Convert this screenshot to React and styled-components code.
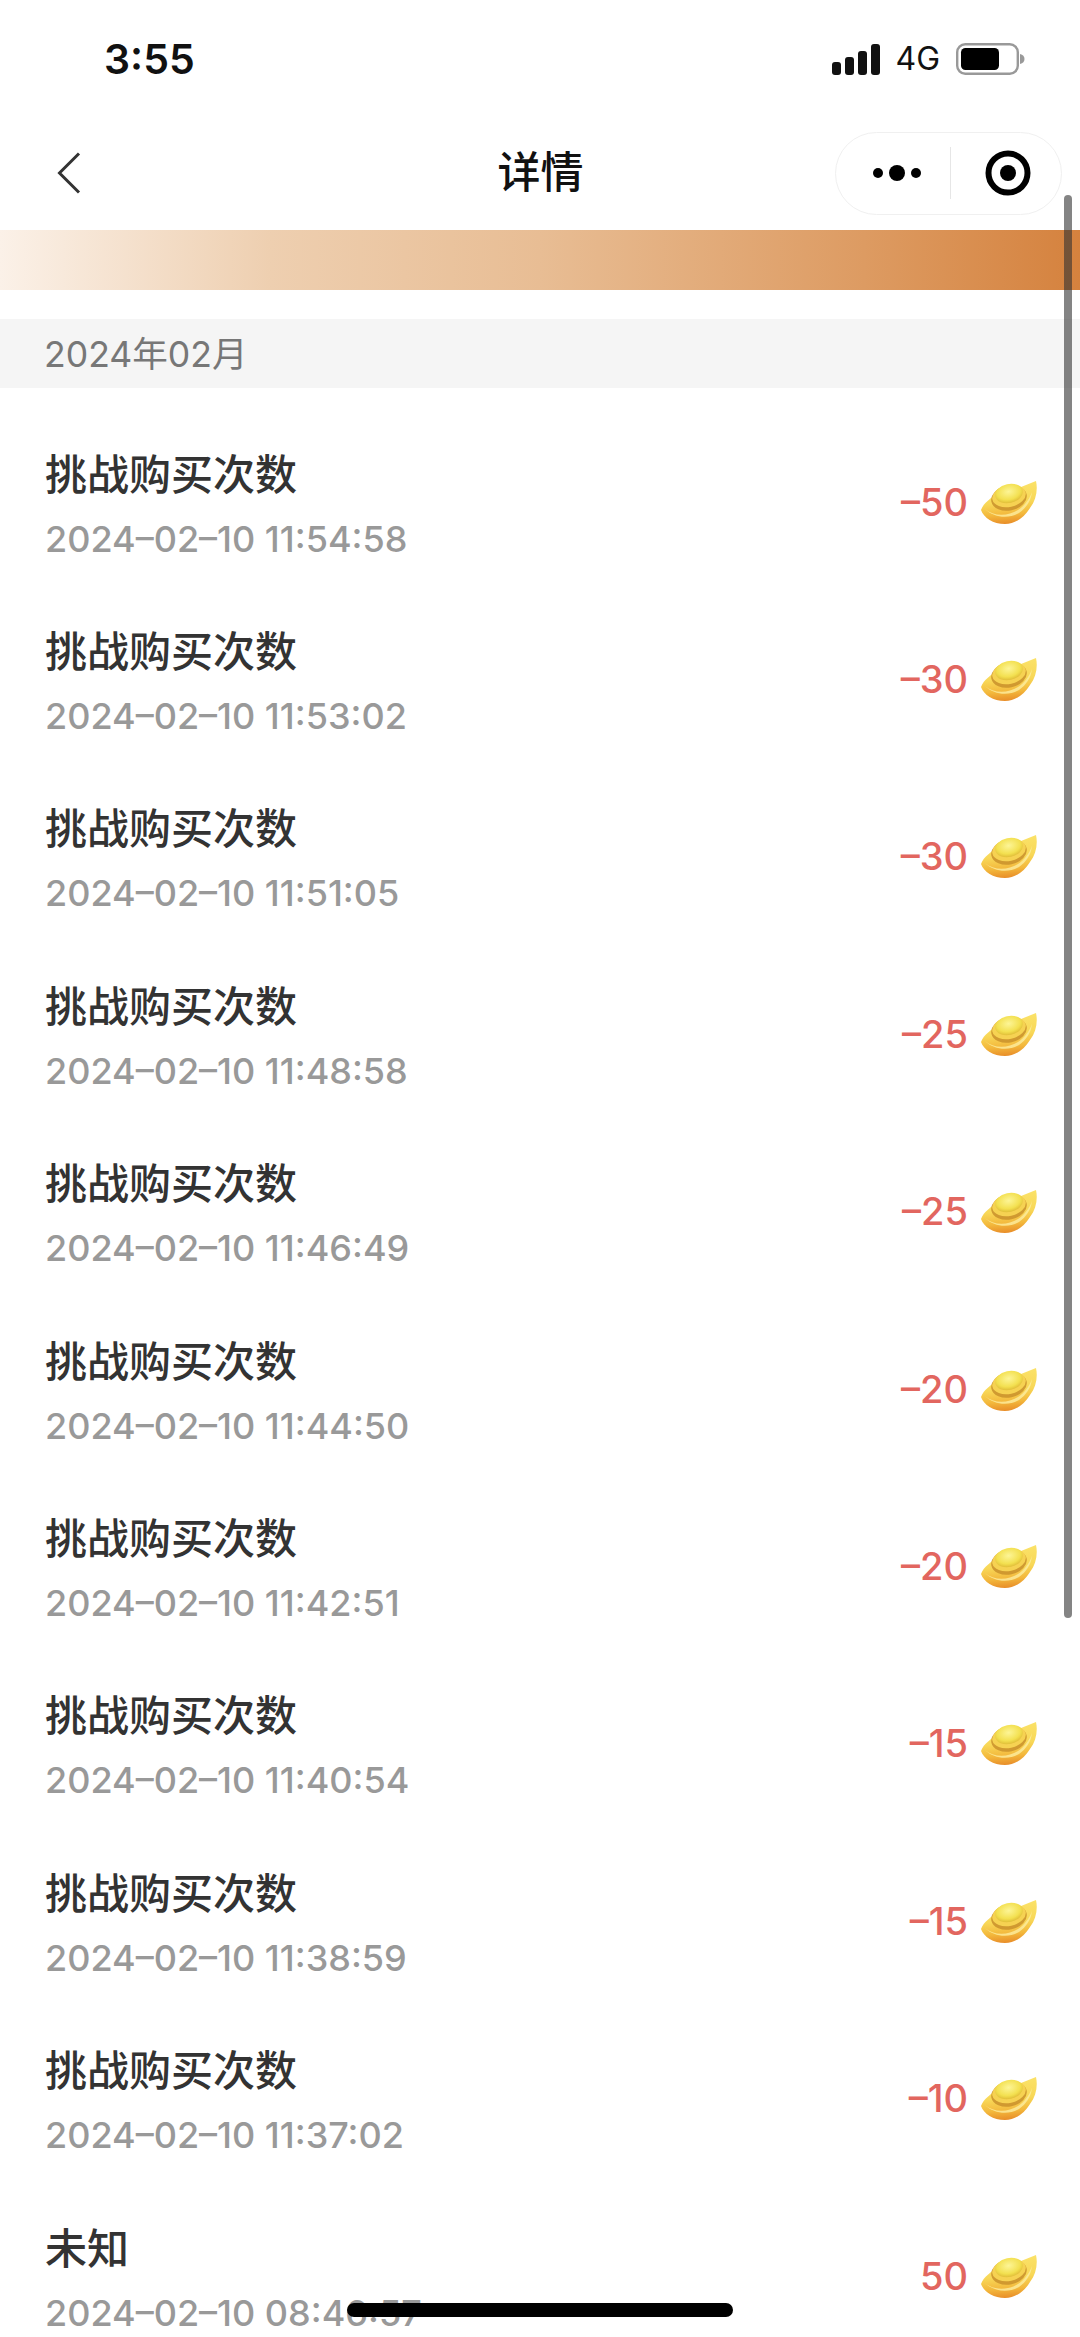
import React from "react";
import styled, { createGlobalStyle } from "styled-components";

const Global = createGlobalStyle`
  html, body { margin: 0; padding: 0; background: #fff; }
  * { box-sizing: border-box; }
`;
const LATIN = `Inter, "Liberation Sans", "Noto Sans CJK SC", sans-serif`;
const CJK = `"Noto Sans CJK SC", "Liberation Sans", sans-serif`;

const Page = styled.div`
  position: relative; width: 1080px; height: 2337px; overflow: hidden; background: #fff; font-family: ${LATIN};
`;
const StatusBar = styled.div`
  height: 116px; display: flex; align-items: center; justify-content: space-between; padding: 0 55px 0 104px;
`;
const Clock = styled.div`
  font-size: 41px; font-weight: 600; color: #111; line-height: 1; margin-top: 2px;
`;
const StatusIcons = styled.div`display: flex; align-items: center; margin-top: 2px;`;
const Network = styled.span`
  font-size: 32px; color: #111; line-height: 1; margin: 0 16px 0 15px;
`;
const Nav = styled.div`
  height: 114px; display: grid; grid-template-columns: 1fr auto 1fr; align-items: center; padding: 0 18px 0 19px;
`;
const Back = styled.div`display: flex; align-items: center; padding-left: 38px;`;
const NavTitle = styled.div`
  font-family: ${CJK}; font-size: 43px; font-weight: 500; color: #111; line-height: 1; margin-top: -8px;
`;
const Capsule = styled.div`
  justify-self: end; width: 227px; height: 83px; border: 1.5px solid #f0f0f0; border-radius: 42px; display: flex; align-items: center; background: #fff;
`;
const CapsuleSide = styled.div`
  flex: 1; height: 100%; display: flex; align-items: center; justify-content: center; padding-left: ${p => p.$shift}px;
`;
const CapsuleDivider = styled.div`width: 1px; height: 52px; background: #e6e6e6;`;
const Banner = styled.div`
  height: 60px; background: linear-gradient(90deg, #fbf1e8 0%, #eecfb0 25%, #e8bd94 50%, #dd9b62 80%, #d5823e 100%);
`;
const MonthBar = styled.div`
  margin-top: 29px; height: 69px; background: #f5f5f5; padding: 0 0 5px 44px; display: flex; align-items: center; font-size: 35.6px; color: #777;
`;
const List = styled.div`padding-top: 29px;`;
const Row = styled.div`
  height: 177.4px; padding: 0 43px 0 45px; display: flex; align-items: center; justify-content: space-between;
`;
const RowText = styled.div`display: flex; flex-direction: column; padding-bottom: 7px;`;
const RowTitle = styled.div`
  font-family: ${CJK}; font-size: 42px; font-weight: 500; color: #333; line-height: 58px;
`;
const RowDate = styled.div`
  font-size: 36px; font-weight: 450; color: #999; line-height: 46px; margin-top: 15px;
`;
const Amount = styled.div`display: flex; align-items: center; gap: 13px; margin-top: -8px;`;
const AmountValue = styled.span`font-size: 38px; font-weight: 500; color: #e2665f; line-height: 1;`;
const Scrollbar = styled.div`
  position: absolute; top: 195px; right: 8px; width: 8px; height: 1423px; border-radius: 4px; background: rgba(50, 50, 50, 0.6);
`;
const HomeIndicator = styled.div`
  position: absolute; left: 347px; top: 2303px; width: 386px; height: 14px; border-radius: 7px; background: #000;
`;

const Signal = () => (
  <svg width="48" height="31" viewBox="0 0 48 31" fill="#111">
    <rect x="0" y="18" width="9" height="13" rx="3" />
    <rect x="13" y="13" width="9" height="18" rx="3" />
    <rect x="26" y="7" width="9" height="24" rx="3" />
    <rect x="39" y="0" width="9" height="31" rx="3" />
  </svg>
);
const Battery = () => (
  <svg width="69" height="32" viewBox="0 0 69 32">
    <rect x="1.2" y="1.2" width="60.6" height="29.6" rx="8" fill="none" stroke="#999" strokeWidth="2.4" />
    <rect x="5" y="5" width="38" height="22" rx="4.5" fill="#000" />
    <path d="M64 11c3 .6 4.5 2.6 4.5 5s-1.5 4.4-4.5 5z" fill="#999" />
  </svg>
);
const Chevron = () => (
  <svg width="24" height="42" viewBox="0 0 24 42" fill="none" stroke="#333" strokeWidth="3">
    <path d="M22 1.5 2.5 21 22 40.5" />
  </svg>
);
const More = () => (
  <svg width="48" height="18" viewBox="0 0 48 18" fill="#000">
    <circle cx="5" cy="9" r="5" /><circle cx="24" cy="9" r="8" /><circle cx="43" cy="9" r="5" />
  </svg>
);
const Target = () => (
  <svg width="46" height="46" viewBox="0 0 46 46">
    <circle cx="23" cy="23" r="19.5" fill="none" stroke="#000" strokeWidth="6" />
    <circle cx="23" cy="23" r="8" fill="#000" />
  </svg>
);
const Ingot = ({ id }) => (
  <svg width="56" height="44" viewBox="0 0 56 44">
    <defs>
      <linearGradient id={`b${id}`} x1="0.4" y1="0" x2="0.5" y2="1">
        <stop offset="0" stopColor="#fbe36a" />
        <stop offset="0.5" stopColor="#f8d858" />
        <stop offset="0.78" stopColor="#f3b83c" />
        <stop offset="1" stopColor="#e88c28" />
      </linearGradient>
      <radialGradient id={`t${id}`} cx="0.5" cy="0.4" r="0.6">
        <stop offset="0" stopColor="#fdf596" />
        <stop offset="0.7" stopColor="#f3e050" />
        <stop offset="1" stopColor="#e0bd38" />
      </radialGradient>
    </defs>
    <path d="M0 30C3 22 10 19 14 14 20 7 32 5 40 7 45 5 50 3 55 1c2 9 0 19-6 27-6 10-15 16-25 16C12 44 3 38 0 30z" fill={`url(#b${id})`} />
    <path d="M4 29c8 7 22 8 33 1 6-4 11-10 14-18-1 9-6 16-13 21-10 6-25 5-34-4z" fill="#fdeea0" opacity="0.8" />
    <ellipse cx="28" cy="18" rx="18" ry="12.5" transform="rotate(-12 28 18)" fill="#c9902c" opacity="0.85" />
    <ellipse cx="28" cy="16" rx="17" ry="11" transform="rotate(-12 28 16)" fill="#f6d252" />
    <ellipse cx="28" cy="13.5" rx="14" ry="9.5" transform="rotate(-12 28 13.5)" fill={`url(#t${id})`} />
  </svg>
);

const ROWS = [
  ["挑战购买次数", "2024–02–10 11:54:58", "–50"],
  ["挑战购买次数", "2024–02–10 11:53:02", "–30"],
  ["挑战购买次数", "2024–02–10 11:51:05", "–30"],
  ["挑战购买次数", "2024–02–10 11:48:58", "–25"],
  ["挑战购买次数", "2024–02–10 11:46:49", "–25"],
  ["挑战购买次数", "2024–02–10 11:44:50", "–20"],
  ["挑战购买次数", "2024–02–10 11:42:51", "–20"],
  ["挑战购买次数", "2024–02–10 11:40:54", "–15"],
  ["挑战购买次数", "2024–02–10 11:38:59", "–15"],
  ["挑战购买次数", "2024–02–10 11:37:02", "–10"],
  ["未知", "2024–02–10 08:46:57", "50"],
];

export default function App() {
  return (
    <Page>
      <Global />
      <StatusBar>
        <Clock>3:55</Clock>
        <StatusIcons><Signal /><Network>4G</Network><Battery /></StatusIcons>
      </StatusBar>
      <Nav>
        <Back><Chevron /></Back>
        <NavTitle>详情</NavTitle>
        <Capsule>
          <CapsuleSide $shift={8}><More /></CapsuleSide>
          <CapsuleDivider />
          <CapsuleSide $shift={4}><Target /></CapsuleSide>
        </Capsule>
      </Nav>
      <Banner />
      <MonthBar>2024年02月</MonthBar>
      <List>
        {ROWS.map(([title, date, value], i) => (
          <Row key={i}>
            <RowText>
              <RowTitle>{title}</RowTitle>
              <RowDate>{date}</RowDate>
            </RowText>
            <Amount>
              <AmountValue>{value}</AmountValue>
              <Ingot id={i} />
            </Amount>
          </Row>
        ))}
      </List>
      <Scrollbar />
      <HomeIndicator />
    </Page>
  );
}
